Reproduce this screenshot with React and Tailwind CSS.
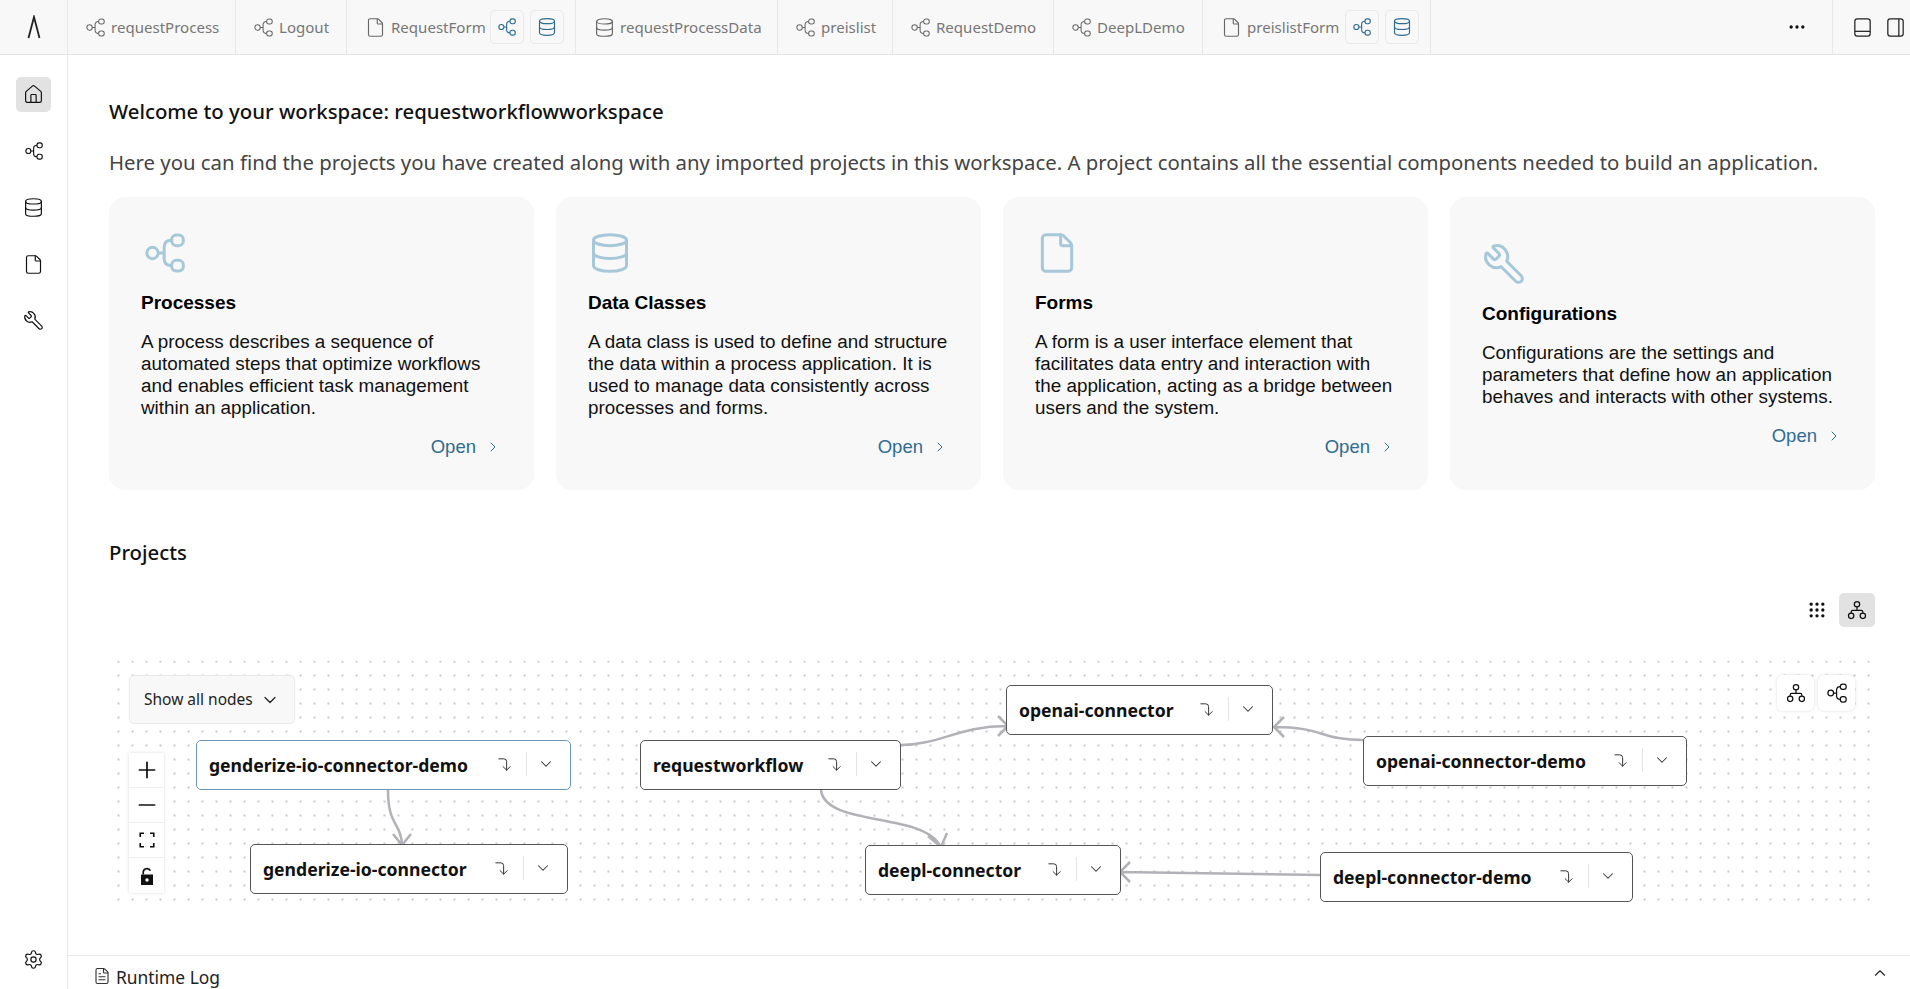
import React from "react";
import { House, Database, File, FileText, Wrench, Settings, ChevronRight, ChevronDown, ChevronUp, CornerRightDown, Plus, Minus, Grip, Ellipsis } from "lucide-react";

const Proc = ({ className, strokeWidth = 1.5 }) => (
  <svg viewBox="0 0 24 24" fill="none" stroke="currentColor" strokeWidth={strokeWidth} className={className}>
    <circle cx="4.5" cy="12" r="3.4" />
    <rect x="16" y="1.2" width="7" height="6.4" rx="2.8" />
    <rect x="16" y="16.4" width="7" height="6.4" rx="2.8" />
    <path d="M7.9 12H11.5M16 4.4C13 4.4 11.5 6 11.5 8.5V15.5C11.5 18 13 19.6 16 19.6" />
  </svg>
);
const ProcBig = ({ className }) => (
  <div className={`${className} flex items-center pl-[4px]`}>
    <Proc className="w-[40px] h-[40px]" strokeWidth={1.8} />
  </div>
);
const Tree = ({ className }) => (
  <svg viewBox="0 0 24 24" fill="none" stroke="currentColor" strokeWidth="1.5" className={className}>
    <circle cx="12" cy="5" r="3.2" />
    <circle cx="5" cy="19" r="3.2" />
    <circle cx="19" cy="19" r="3.2" />
    <path d="M12 8.2V12.5M5 15.8V14.5C5 13.4 5.9 12.5 7 12.5H17C18.1 12.5 19 13.4 19 14.5V15.8" />
  </svg>
);
const PanelB = ({ className }) => (
  <svg viewBox="0 0 24 24" fill="none" stroke="currentColor" strokeWidth="1.3" className={className}>
    <rect x="4" y="3" width="16" height="18" rx="2.5" />
    <path d="M4 16H20" />
  </svg>
);
const PanelR = ({ className }) => (
  <svg viewBox="0 0 24 24" fill="none" stroke="currentColor" strokeWidth="1.3" className={className}>
    <rect x="4" y="3" width="16" height="18" rx="2.5" />
    <path d="M15.5 3V21" />
  </svg>
);
const Fit = ({ className }) => (
  <svg viewBox="0 0 24 24" fill="none" stroke="currentColor" strokeWidth="2.2" className={className}>
    <path d="M3 8V3H8M16 3H21V8M21 16V21H16M8 21H3V16" />
  </svg>
);
const Unlock = ({ className }) => (
  <svg viewBox="0 0 24 24" className={className} fill="currentColor">
    <path d="M4 10H20V24H4ZM12 15A2.3 2.3 0 1 0 12 19.6A2.3 2.3 0 0 0 12 15Z" fillRule="evenodd" />
    <path d="M7 10V7.5A5 5 0 0 1 16.5 5" fill="none" stroke="currentColor" strokeWidth="2.2" />
  </svg>
);
const Spanner = ({ className, strokeWidth }) => <Wrench className={`${className} -scale-x-100`} strokeWidth={strokeWidth} />;

const Tab = ({ icon: I, label, width, actions, small }) => (
  <div className={`flex items-center h-full border-r border-[#e8e8e8] pl-[18px] ${width}`}>
    <I className={`${small ? "w-[19px] h-[19px] mr-[6px]" : "w-[21px] h-[21px] mr-[5px]"} text-[#666] shrink-0`} strokeWidth={1.3} />
    <span className="text-[15.05px] text-[#777]">{label}</span>
    {actions && (
      <div className="flex gap-[6px] ml-auto mr-[11px]">
        <div className="w-[34px] h-[34px] rounded-[5px] border border-[#e9e9e9] flex items-center justify-center"><Proc className="w-[18px] h-[18px] text-[#2f6c92]" /></div>
        <div className="w-[34px] h-[34px] rounded-[5px] border border-[#e9e9e9] flex items-center justify-center"><Database className="w-[20px] h-[20px] text-[#2f6c92]" strokeWidth={1.4} /></div>
      </div>
    )}
  </div>
);

const SideBtn = ({ icon: I, active, small }) => (
  <div className={`w-[35px] h-[35px] rounded-[5px] flex items-center justify-center ${active ? "bg-[#e2e2e2]" : ""}`}>
    <I className={`${small ? "w-[18px] h-[18px]" : "w-[21px] h-[21px]"} text-[#111]`} strokeWidth={small ? 1.5 : 1.35} />
  </div>
);

const Card = ({ icon: I, title, body }) => (
  <div className="bg-[#f8f8f8] rounded-[16px] h-[293px] pl-[32px] pr-[30px] pt-[2px] flex flex-col justify-center font-['Liberation_Sans',sans-serif]">
    <I className="w-[44px] h-[44px] text-[#a7c8d9]" strokeWidth={1.65} />
    <div className="mt-[16px] text-[19px] leading-[24px] font-bold text-black">{title}</div>
    <div className="mt-[16px] text-[18.85px] leading-[22px] text-[#111]">{body}</div>
    <div className="mt-[16px] flex items-center justify-end text-[18.5px] leading-[24px] text-[#2f6c92] pr-[3px]">
      Open <ChevronRight className="ml-[9px] w-[16px] h-[16px]" strokeWidth={1.5} />
    </div>
  </div>
);

const Node = ({ label, left, top, width, blue }) => (
  <div
    className={`absolute h-[50px] bg-white rounded-[5px] border flex items-center pl-[12px] pr-[12px] ${blue ? "border-[#6f97b3]" : "border-[#555]"}`}
    style={{ left, top, width }}
  >
    <span className="text-[17.6px] font-bold text-[#111] whitespace-nowrap">{label}</span>
    <div className="ml-auto flex items-center -translate-y-[1px]">
      <CornerRightDown className="w-[17px] h-[17px] text-[#333]" strokeWidth={1.4} />
      <div className="w-px h-[24px] bg-[#e5e5e5] ml-[13px] mr-[10px]" />
      <ChevronDown className="w-[18px] h-[18px] text-[#333] mr-[3px]" strokeWidth={1.4} />
    </div>
  </div>
);

export default function App() {
  return (
    <div className="w-[1910px] h-[989px] overflow-hidden bg-white flex flex-col font-['Noto_Sans','Open_Sans',sans-serif] text-[#111]">
      <header className="h-[55px] shrink-0 bg-[#f8f8f8] border-b border-[#e5e5e5] flex items-center">
        <div className="w-[68px] h-full border-r border-[#e8e8e8] flex items-center justify-center">
          <svg viewBox="0 0 16 24" className="w-[16px] h-[24px] text-[#222]" fill="none" stroke="currentColor" strokeWidth="1.8"><path d="M2.5 23L8 2L13.5 23" /></svg>
        </div>
        <Tab small icon={Proc} label="requestProcess" width="w-[168px]" />
        <Tab small icon={Proc} label="Logout" width="w-[111px]" />
        <Tab icon={File} label="RequestForm" width="w-[229px]" actions />
        <Tab icon={Database} label="requestProcessData" width="w-[202px]" />
        <Tab small icon={Proc} label="preislist" width="w-[115px]" />
        <Tab small icon={Proc} label="RequestDemo" width="w-[161px]" />
        <Tab small icon={Proc} label="DeepLDemo" width="w-[149px]" />
        <Tab icon={File} label="preislistForm" width="w-[228px]" actions />
        <div className="flex-1 flex justify-end pr-[25px]"><Ellipsis className="w-[20px] h-[20px] text-[#111]" /></div>
        <div className="w-[78px] h-full border-l border-[#e8e8e8] flex items-center pl-[18px] gap-[9.5px]">
          <PanelB className="w-[23px] h-[23px] text-[#222]" />
          <PanelR className="w-[23px] h-[23px] text-[#222]" />
        </div>
      </header>

      <div className="flex-1 flex min-h-0">
        <aside className="w-[68px] shrink-0 border-r border-[#e8e8e8] flex flex-col items-center pt-[22px] pb-[12px]">
          <div className="flex flex-col gap-[21.5px]">
            <SideBtn icon={House} active />
            <SideBtn small icon={Proc} />
            <SideBtn icon={Database} />
            <SideBtn icon={File} />
            <SideBtn icon={Spanner} />
          </div>
          <div className="mt-auto"><SideBtn icon={Settings} /></div>
        </aside>

        <div className="flex-1 flex flex-col min-w-0">
          <main className="flex-1 min-h-0 pl-[41px] pr-[35px] pt-[42px]">
            <h1 className="text-[20.35px] leading-[28px] font-medium text-[#111]">Welcome to your workspace: requestworkflowworkspace</h1>
            <p className="mt-[23px] text-[20.35px] leading-[28px] text-[#444] whitespace-nowrap">Here you can find the projects you have created along with any imported projects in this workspace. A project contains all the essential components needed to build an application.</p>
            <div className="mt-[21px] grid grid-cols-4 gap-[22px]">
              <Card icon={ProcBig} title="Processes" body="A process describes a sequence of automated steps that optimize workflows and enables efficient task management within an application." />
              <Card icon={Database} title="Data Classes" body="A data class is used to define and structure the data within a process application. It is used to manage data consistently across processes and forms." />
              <Card icon={File} title="Forms" body="A form is a user interface element that facilitates data entry and interaction with the application, acting as a bridge between users and the system." />
              <Card icon={Spanner} title="Configurations" body="Configurations are the settings and parameters that define how an application behaves and interacts with other systems." />
            </div>
            <h2 className="mt-[48px] text-[20.35px] leading-[28px] font-medium text-[#111]">Projects</h2>
            <div className="mt-[27px] flex justify-end items-center gap-[5px]">
              <div className="w-[34px] h-[34px] flex items-center justify-center"><Grip className="w-[20px] h-[20px] text-[#111]" strokeWidth={2} /></div>
              <div className="w-[36px] h-[34px] rounded-[5px] bg-[#e2e2e2] flex items-center justify-center"><Tree className="w-[20px] h-[20px] text-[#111]" /></div>
            </div>
            <div className="relative mt-[34px] h-[244px] bg-[radial-gradient(#c8c8c8_1px,transparent_1px)] bg-[size:14px_14px] bg-[position:2.5px_-6.5px]">
              <svg className="absolute inset-0 w-full h-full" fill="none" stroke="#b1b1b7" strokeWidth="2.5">
                <path d="M279 129C279 166 292 161 293 183M284 173L293 184L302 173" />
                <path d="M792 84C830 84 850 65 898 65M889 55L899 65L889 75" />
                <path d="M712 129C716 166 815 151 831 185M819 175L832 186L838 172" />
                <path d="M1255 79C1210 79 1215 66 1165 66M1175 56L1165 66L1175 76" />
                <path d="M1211 214L1011 211M1021 201L1011 211L1021 221" />
              </svg>
              <div className="absolute left-[20px] top-[14px] w-[166px] h-[49px] rounded-[5px] bg-[#f8f8f8] border border-[#e9e9e9] flex items-center pl-[14px] text-[15.5px] text-[#222]">
                Show all nodes <ChevronDown className="ml-[7px] w-[20px] h-[20px]" strokeWidth={1.5} />
              </div>
              <div className="absolute left-[20px] top-[92px] w-[35px] bg-white shadow-[0_0_3px_rgba(0,0,0,0.15)] flex flex-col text-[#111]">
                <div className="h-[35px] flex items-center justify-center border-b border-[#eee]"><Plus className="w-[26px] h-[26px]" strokeWidth={1.6} /></div>
                <div className="h-[35px] flex items-center justify-center border-b border-[#eee]"><Minus className="w-[26px] h-[26px]" strokeWidth={1.6} /></div>
                <div className="h-[35px] flex items-center justify-center border-b border-[#eee]"><Fit className="w-[18px] h-[18px]" /></div>
                <div className="h-[35px] flex items-center justify-center"><Unlock className="w-[18px] h-[18px]" /></div>
              </div>
              <div className="absolute right-[20px] top-[14px] flex gap-[4px]">
                <div className="w-[37px] h-[36px] rounded-[6px] bg-white shadow-[0_0_3px_rgba(0,0,0,0.15)] flex items-center justify-center"><Tree className="w-[20px] h-[20px] text-[#111]" /></div>
                <div className="w-[37px] h-[36px] rounded-[6px] bg-white shadow-[0_0_3px_rgba(0,0,0,0.15)] flex items-center justify-center"><Proc className="w-[20px] h-[20px] text-[#111]" /></div>
              </div>
              <Node label="genderize-io-connector-demo" left={87} top={79} width={375} blue />
              <Node label="genderize-io-connector" left={141} top={183} width={318} />
              <Node label="requestworkflow" left={531} top={79} width={261} />
              <Node label="openai-connector" left={897} top={24} width={267} />
              <Node label="openai-connector-demo" left={1254} top={75} width={324} />
              <Node label="deepl-connector" left={756} top={184} width={256} />
              <Node label="deepl-connector-demo" left={1211} top={191} width={313} />
            </div>
          </main>
          <footer className="h-[34px] shrink-0 border-t border-[#e8e8e8] flex items-start pt-[9px] pl-[25px] pr-[21px]">
            <FileText className="w-[18px] h-[18px] mt-[2px] text-[#333]" strokeWidth={1.5} />
            <span className="ml-[5px] text-[17.4px] leading-[24px] text-[#222]">Runtime Log</span>
            <ChevronUp className="ml-auto -mt-[1px] w-[18px] h-[18px] text-[#222]" strokeWidth={1.5} />
          </footer>
        </div>
      </div>
    </div>
  );
}
